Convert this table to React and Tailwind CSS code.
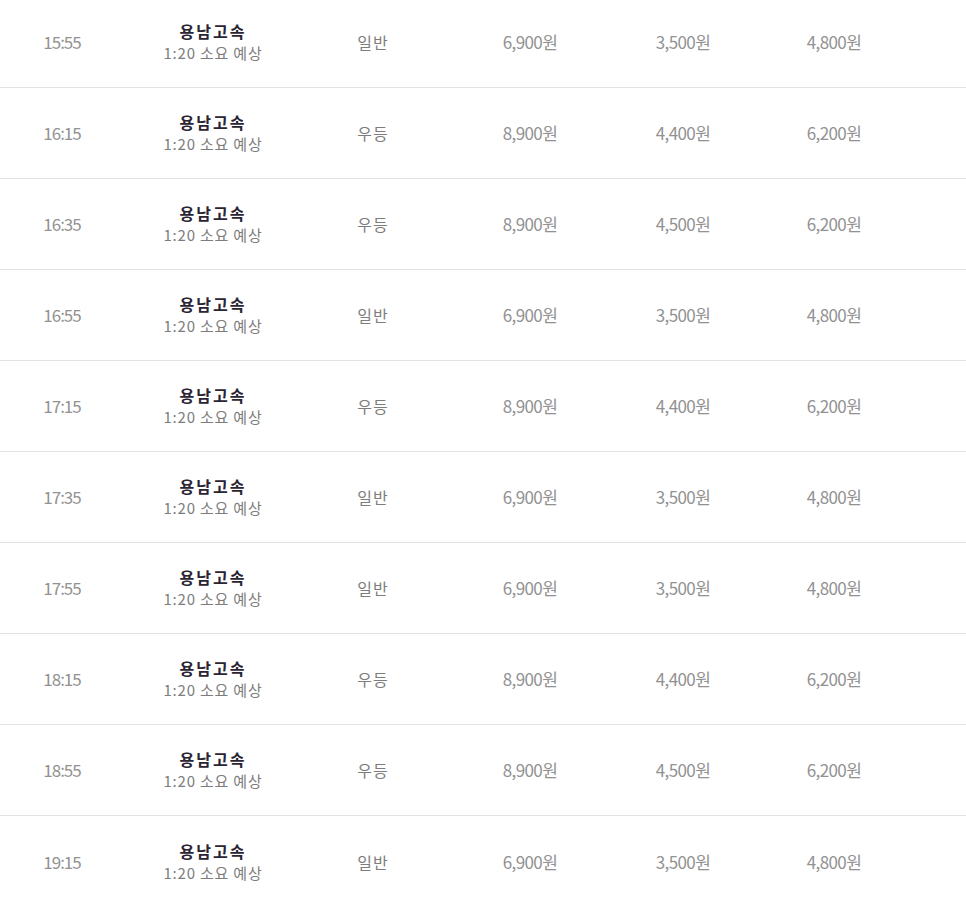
import React from 'react';

// 배차 시간표 데이터
const rows = [
  { time: '15:55', grade: '일반', adult: '6,900원', child: '3,500원', teen: '4,800원' },
  { time: '16:15', grade: '우등', adult: '8,900원', child: '4,400원', teen: '6,200원' },
  { time: '16:35', grade: '우등', adult: '8,900원', child: '4,500원', teen: '6,200원' },
  { time: '16:55', grade: '일반', adult: '6,900원', child: '3,500원', teen: '4,800원' },
  { time: '17:15', grade: '우등', adult: '8,900원', child: '4,400원', teen: '6,200원' },
  { time: '17:35', grade: '일반', adult: '6,900원', child: '3,500원', teen: '4,800원' },
  { time: '17:55', grade: '일반', adult: '6,900원', child: '3,500원', teen: '4,800원' },
  { time: '18:15', grade: '우등', adult: '8,900원', child: '4,400원', teen: '6,200원' },
  { time: '18:55', grade: '우등', adult: '8,900원', child: '4,500원', teen: '6,200원' },
  { time: '19:15', grade: '일반', adult: '6,900원', child: '3,500원', teen: '4,800원' },
];

export default function App() {
  return (
    <div
      className="min-h-screen bg-white overflow-hidden"
      style={{ fontFamily: '"Noto Sans CJK KR", "Noto Sans", sans-serif' }}
    >
      <div className="-mt-[3px]">
        {rows.map((r, i) => (
          <div
            key={i}
            className={`flex items-center h-[91px] text-[17px] ${i < rows.length - 1 ? 'border-b border-[#e2e2e2]' : ''}`}
          >
            <div className="w-[124px] text-center text-[#929292] tracking-[-1px]">{r.time}</div>
            <div className="w-[178px] flex flex-col items-center leading-[22px]">
              <span className="text-[16px] font-bold text-[#2a2433] tracking-[2px]">용남고속</span>
              <span className="text-[15px] text-[#7d7d7d] tracking-[0.8px]">1:20 소요 예상</span>
            </div>
            <div className="w-[142px] text-center text-[16px] text-[#7d7d7d] tracking-[1px]">{r.grade}</div>
            <div className="w-[172px] text-center text-[#929292] tracking-[-0.6px]">{r.adult}</div>
            <div className="w-[134px] text-center text-[#929292] tracking-[-0.6px]">{r.child}</div>
            <div className="w-[168px] text-center text-[#929292] tracking-[-0.6px]">{r.teen}</div>
          </div>
        ))}
      </div>
    </div>
  );
}
